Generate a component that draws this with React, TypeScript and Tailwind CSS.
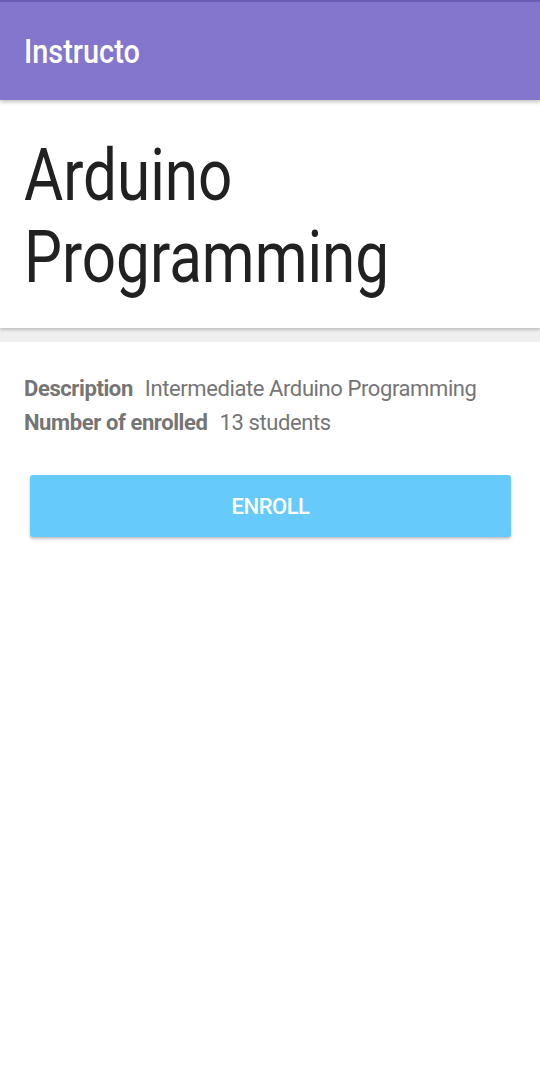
import React from "react";

export default function App() {
  return (
    <div className="w-[540px] h-[1080px] flex flex-col bg-[#efefef] overflow-hidden" style={{ fontFamily: "Roboto, 'Noto Sans', sans-serif" }}>
      <div className="h-[100px] shrink-0 bg-[#8476cc] border-t-2 border-[#6a5cb4] flex items-center px-6 shadow-[0_2px_4px_rgba(0,0,0,0.25)] z-10">
        <span className="inline-block origin-left scale-x-[0.85] text-white text-[34px] font-medium leading-[40px] whitespace-nowrap">Instructo</span>
      </div>
      <div className="bg-white h-[228px] shrink-0 px-6 pt-[35px] shadow-[0_2px_3px_rgba(0,0,0,0.2)]">
        <h1 className="inline-block origin-left scale-x-[0.836] text-[#212121] text-[72px] leading-[82px] whitespace-nowrap">Arduino<br />Programming</h1>
      </div>
      <div className="bg-white flex-1 mt-[14px] px-6 pt-[30px]">
        <div className="text-[22px] leading-[34px] text-[#757575] tracking-[-0.4px]">
          <div><span className="font-bold mr-3">Description</span>Intermediate Arduino Programming</div>
          <div><span className="font-bold mr-3">Number of enrolled</span>13 students</div>
        </div>
        <button className="mt-[35px] ml-[6px] w-[481px] h-[62px] rounded-[3px] bg-[#66cafb] text-white text-[22px] font-medium tracking-[-0.5px] shadow-[0_2px_3px_rgba(0,0,0,0.25)]">ENROLL</button>
      </div>
    </div>
  );
}
